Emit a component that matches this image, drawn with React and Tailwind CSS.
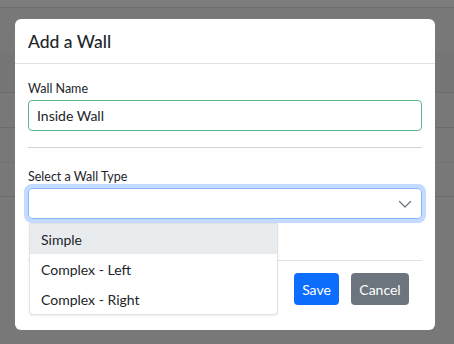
import React from "react";

export default function App() {
  const font = { fontFamily: 'Lato, "Noto Sans", "Liberation Sans", sans-serif' };
  return (
    <div className="relative w-[454px] h-[344px] overflow-hidden bg-[#787878]" style={font}>
      {/* background page behind overlay */}
      <div className="flex flex-col">
        <div className="h-[8px] bg-[#7c7c7c] border-b border-[#6c6c6c]" />
        <div className="h-[44px] bg-[#787878]" />
        <div className="h-[41px] bg-[#757575] border-b border-[#6c6c6c]" />
        <div className="h-[35px] bg-[#787878] border-b border-[#6c6c6c]" />
        <div className="h-[35px] bg-[#787878] border-b border-[#727272]" />
        <div className="h-[34px] bg-[#787878] border-b border-[#6c6c6c]" />
        <div className="h-[140px] bg-[#787878]" />
      </div>

      {/* modal */}
      <div className="absolute left-[15px] top-[19px] w-[420px] h-[311px] bg-white rounded-[6px] text-[#212529]">
        <div className="h-[45px] px-[13px] flex items-center border-b border-[#dee2e6]">
          <h5 className="text-[17.5px] leading-[21px] font-medium">Add a Wall</h5>
        </div>
        <div className="px-[13px] pt-[16px]">
          <label className="block text-[12.5px] leading-[17px] text-[#212529] mb-[3px]">Wall Name</label>
          <div className="h-[31px] border border-[#5cb88a] rounded-[4px] flex items-center px-[8px] text-[14px]">
            Inside Wall
          </div>
          <div className="mt-[16px] border-t border-[#d4d4d4]" />
          <label className="block mt-[20px] text-[12.5px] leading-[17px] mb-[3px]">Select a Wall Type</label>
          <div className="relative h-[31px] border border-[#86b7fe] rounded-[4px] shadow-[0_0_0_4px_rgba(13,110,253,0.25)] flex items-center justify-end pr-[9px]">
            <svg width="14" height="10" viewBox="0 0 14 10" fill="none">
              <path d="M1.5 2.5 L7 8 L12.5 2.5" stroke="#6c757d" strokeWidth="1.2" strokeLinecap="round" strokeLinejoin="round" />
            </svg>
          </div>
          <div className="mt-[41px] border-t border-[#dee2e6]" />
          <div className="flex justify-end gap-[12px] pt-[12px] pr-[13px]">
            <button className="h-[32px] w-[45px] rounded-[4px] bg-[#0d6efd] text-white text-[14px]">Save</button>
            <button className="h-[32px] w-[58px] rounded-[4px] bg-[#6c757d] text-white text-[14px]">Cancel</button>
          </div>
        </div>
      </div>

      {/* dropdown list */}
      <div className="absolute left-[29px] top-[223px] w-[249px] bg-white border border-[#e2e2e2] rounded-b-[4px] text-[14px] text-[#212529] shadow-[0_1px_2px_rgba(0,0,0,0.08)]">
        <div className="h-[30px] flex items-center px-[11px] bg-[#e9ecef]">Simple</div>
        <div className="h-[30px] flex items-center px-[11px]">Complex - Left</div>
        <div className="h-[30px] flex items-center px-[11px]">Complex - Right</div>
      </div>
    </div>
  );
}
